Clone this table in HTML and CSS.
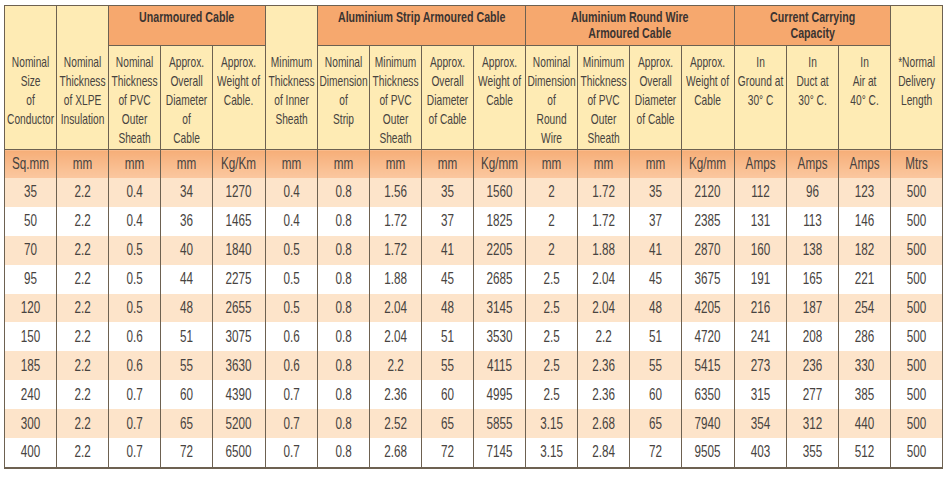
FILE: index.html
```html
<!DOCTYPE html>
<html>
<head>
<meta charset="utf-8">
<link rel="stylesheet" href="styles.css">
</head>
<body>
<table class="spec">
  <colgroup>
    <col><col><col><col><col><col><col><col><col><col><col><col><col><col><col><col><col><col>
  </colgroup>
  <thead>
    <tr class="groups">
      <th class="hd span" rowspan="2"><span>Nominal<br>Size<br>of<br>Conductor</span></th>
      <th class="hd span" rowspan="2"><span>Nominal<br>Thickness<br>of XLPE<br>Insulation</span></th>
      <th class="grp" colspan="3"><span>Unarmoured Cable</span></th>
      <th class="hd span" rowspan="2"><span>Minimum<br>Thickness<br>of Inner<br>Sheath</span></th>
      <th class="grp" colspan="4"><span>Aluminium Strip Armoured Cable</span></th>
      <th class="grp" colspan="4"><span>Aluminium Round Wire<br>Armoured Cable</span></th>
      <th class="grp" colspan="3"><span>Current Carrying<br>Capacity</span></th>
      <th class="hd span" rowspan="2"><span>*Normal<br>Delivery<br>Length</span></th>
    </tr>
    <tr class="cols">
      <th class="hd"><span>Nominal<br>Thickness<br>of PVC<br>Outer<br>Sheath</span></th>
      <th class="hd"><span>Approx.<br>Overall<br>Diameter<br>of<br>Cable</span></th>
      <th class="hd"><span>Approx.<br>Weight of<br>Cable.</span></th>
      <th class="hd"><span>Nominal<br>Dimension<br>of<br>Strip</span></th>
      <th class="hd"><span>Minimum<br>Thickness<br>of PVC<br>Outer<br>Sheath</span></th>
      <th class="hd"><span>Approx.<br>Overall<br>Diameter<br>of Cable</span></th>
      <th class="hd"><span>Approx.<br>Weight of<br>Cable</span></th>
      <th class="hd"><span>Nominal<br>Dimension<br>of<br>Round<br>Wire</span></th>
      <th class="hd"><span>Minimum<br>Thickness<br>of PVC<br>Outer<br>Sheath</span></th>
      <th class="hd"><span>Approx.<br>Overall<br>Diameter<br>of Cable</span></th>
      <th class="hd"><span>Approx.<br>Weight of<br>Cable</span></th>
      <th class="hd"><span>In<br>Ground at<br>30° C</span></th>
      <th class="hd"><span>In<br>Duct at<br>30° C.</span></th>
      <th class="hd"><span>In<br>Air at<br>40° C.</span></th>
    </tr>
    <tr class="units">
      <td><span>Sq.mm</span></td><td><span>mm</span></td><td><span>mm</span></td><td><span>mm</span></td><td><span>Kg/Km</span></td><td><span>mm</span></td><td><span>mm</span></td><td><span>mm</span></td><td><span>mm</span></td><td><span>Kg/mm</span></td><td><span>mm</span></td><td><span>mm</span></td><td><span>mm</span></td><td><span>Kg/mm</span></td><td><span>Amps</span></td><td><span>Amps</span></td><td><span>Amps</span></td><td><span>Mtrs</span></td>
    </tr>
  </thead>
  <tbody>
    <tr><td><span>35</span></td><td><span>2.2</span></td><td><span>0.4</span></td><td><span>34</span></td><td><span>1270</span></td><td><span>0.4</span></td><td><span>0.8</span></td><td><span>1.56</span></td><td><span>35</span></td><td><span>1560</span></td><td><span>2</span></td><td><span>1.72</span></td><td><span>35</span></td><td><span>2120</span></td><td><span>112</span></td><td><span>96</span></td><td><span>123</span></td><td><span>500</span></td></tr>
    <tr><td><span>50</span></td><td><span>2.2</span></td><td><span>0.4</span></td><td><span>36</span></td><td><span>1465</span></td><td><span>0.4</span></td><td><span>0.8</span></td><td><span>1.72</span></td><td><span>37</span></td><td><span>1825</span></td><td><span>2</span></td><td><span>1.72</span></td><td><span>37</span></td><td><span>2385</span></td><td><span>131</span></td><td><span>113</span></td><td><span>146</span></td><td><span>500</span></td></tr>
    <tr><td><span>70</span></td><td><span>2.2</span></td><td><span>0.5</span></td><td><span>40</span></td><td><span>1840</span></td><td><span>0.5</span></td><td><span>0.8</span></td><td><span>1.72</span></td><td><span>41</span></td><td><span>2205</span></td><td><span>2</span></td><td><span>1.88</span></td><td><span>41</span></td><td><span>2870</span></td><td><span>160</span></td><td><span>138</span></td><td><span>182</span></td><td><span>500</span></td></tr>
    <tr><td><span>95</span></td><td><span>2.2</span></td><td><span>0.5</span></td><td><span>44</span></td><td><span>2275</span></td><td><span>0.5</span></td><td><span>0.8</span></td><td><span>1.88</span></td><td><span>45</span></td><td><span>2685</span></td><td><span>2.5</span></td><td><span>2.04</span></td><td><span>45</span></td><td><span>3675</span></td><td><span>191</span></td><td><span>165</span></td><td><span>221</span></td><td><span>500</span></td></tr>
    <tr><td><span>120</span></td><td><span>2.2</span></td><td><span>0.5</span></td><td><span>48</span></td><td><span>2655</span></td><td><span>0.5</span></td><td><span>0.8</span></td><td><span>2.04</span></td><td><span>48</span></td><td><span>3145</span></td><td><span>2.5</span></td><td><span>2.04</span></td><td><span>48</span></td><td><span>4205</span></td><td><span>216</span></td><td><span>187</span></td><td><span>254</span></td><td><span>500</span></td></tr>
    <tr><td><span>150</span></td><td><span>2.2</span></td><td><span>0.6</span></td><td><span>51</span></td><td><span>3075</span></td><td><span>0.6</span></td><td><span>0.8</span></td><td><span>2.04</span></td><td><span>51</span></td><td><span>3530</span></td><td><span>2.5</span></td><td><span>2.2</span></td><td><span>51</span></td><td><span>4720</span></td><td><span>241</span></td><td><span>208</span></td><td><span>286</span></td><td><span>500</span></td></tr>
    <tr><td><span>185</span></td><td><span>2.2</span></td><td><span>0.6</span></td><td><span>55</span></td><td><span>3630</span></td><td><span>0.6</span></td><td><span>0.8</span></td><td><span>2.2</span></td><td><span>55</span></td><td><span>4115</span></td><td><span>2.5</span></td><td><span>2.36</span></td><td><span>55</span></td><td><span>5415</span></td><td><span>273</span></td><td><span>236</span></td><td><span>330</span></td><td><span>500</span></td></tr>
    <tr><td><span>240</span></td><td><span>2.2</span></td><td><span>0.7</span></td><td><span>60</span></td><td><span>4390</span></td><td><span>0.7</span></td><td><span>0.8</span></td><td><span>2.36</span></td><td><span>60</span></td><td><span>4995</span></td><td><span>2.5</span></td><td><span>2.36</span></td><td><span>60</span></td><td><span>6350</span></td><td><span>315</span></td><td><span>277</span></td><td><span>385</span></td><td><span>500</span></td></tr>
    <tr><td><span>300</span></td><td><span>2.2</span></td><td><span>0.7</span></td><td><span>65</span></td><td><span>5200</span></td><td><span>0.7</span></td><td><span>0.8</span></td><td><span>2.52</span></td><td><span>65</span></td><td><span>5855</span></td><td><span>3.15</span></td><td><span>2.68</span></td><td><span>65</span></td><td><span>7940</span></td><td><span>354</span></td><td><span>312</span></td><td><span>440</span></td><td><span>500</span></td></tr>
    <tr><td><span>400</span></td><td><span>2.2</span></td><td><span>0.7</span></td><td><span>72</span></td><td><span>6500</span></td><td><span>0.7</span></td><td><span>0.8</span></td><td><span>2.68</span></td><td><span>72</span></td><td><span>7145</span></td><td><span>3.15</span></td><td><span>2.84</span></td><td><span>72</span></td><td><span>9505</span></td><td><span>403</span></td><td><span>355</span></td><td><span>512</span></td><td><span>500</span></td></tr>
  </tbody>
</table>
</body>
</html>
```

FILE: styles.css
```css
html, body {
  margin: 0;
  padding: 0;
  background: #ffffff;
}

body {
  padding: 5px 0 0 4px;
  font-family: "Liberation Sans", Arial, sans-serif;
  color: #474340;
}

.spec {
  width: 939px;
  table-layout: fixed;
  border-collapse: collapse;
  border: 1.5px solid #6d6151;
  border-bottom-width: 2px;
}

.spec th,
.spec td {
  padding: 0;
  text-align: center;
  white-space: nowrap;
  border-left: 1px solid #6d6151;
  border-right: 1px solid #6d6151;
}

/* condensed lettering: a block wider than the cell, squeezed round its centre */
.spec span {
  display: block;
  margin: 0 -14px;
  transform-origin: center;
  transform: scaleX(0.73);
}

.spec .groups {
  height: 40px;
}

.spec .grp {
  background: #f6a86e;
  color: #3b3431;
  font-weight: bold;
  font-size: 14px;
  line-height: 16px;
  vertical-align: top;
  padding-top: 3px;
  border-bottom: 1px solid #6d6151;
}

.spec .grp span {
  margin: 0 -40px;
  transform: scaleX(0.76);
}

.spec .hd {
  background: #feebb4;
  font-weight: normal;
  font-size: 15px;
  line-height: 19px;
  vertical-align: top;
  padding-top: 6px;
  border-bottom: 1px solid #6d6151;
}

.spec .hd span {
  transform: scaleX(0.68);
}

.spec .hd.span {
  padding-top: 46px;
}

.spec .cols {
  height: 104px;
}

.units td {
  height: 28px;
  font-size: 16px;
  background: linear-gradient(#f6ae78, #fbc8a0);
  vertical-align: middle;
}

tbody td {
  height: 28.9px;
  font-size: 16px;
  vertical-align: middle;
}

tbody tr:nth-child(odd) td {
  background: #fde4ca;
}

tbody tr:nth-child(even) td {
  background: #ffffff;
}
```
